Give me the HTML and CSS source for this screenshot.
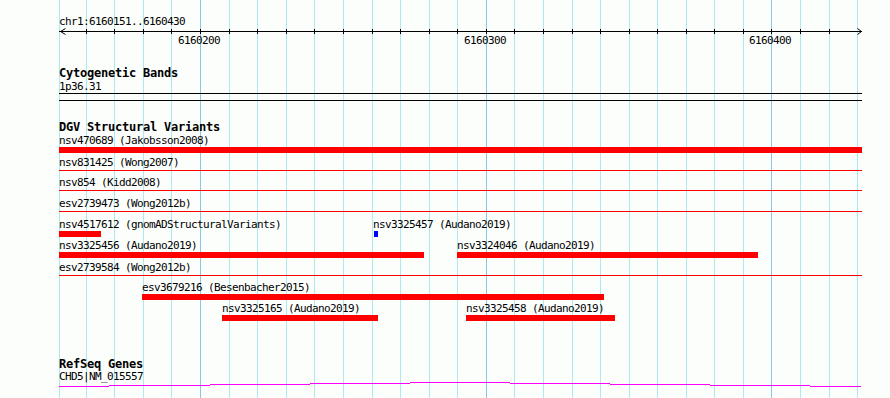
FILE: index.html
```html
<!DOCTYPE html>
<html>
<head>
<meta charset="utf-8">
<link rel="stylesheet" href="styles.css">
</head>
<body>
<div class="view">
  <svg class="grid" width="890" height="398" viewBox="0 0 890 398">
    <g class="minor">
      <rect x="59" y="0" width="1" height="398"/><rect x="86" y="0" width="1" height="398"/>
      <rect x="114" y="0" width="1" height="398"/><rect x="143" y="0" width="1" height="398"/>
      <rect x="171" y="0" width="1" height="398"/><rect x="229" y="0" width="1" height="398"/>
      <rect x="257" y="0" width="1" height="398"/><rect x="286" y="0" width="1" height="398"/>
      <rect x="314" y="0" width="1" height="398"/><rect x="343" y="0" width="1" height="398"/>
      <rect x="372" y="0" width="1" height="398"/><rect x="400" y="0" width="1" height="398"/>
      <rect x="429" y="0" width="1" height="398"/><rect x="457" y="0" width="1" height="398"/>
      <rect x="514" y="0" width="1" height="398"/><rect x="543" y="0" width="1" height="398"/>
      <rect x="572" y="0" width="1" height="398"/><rect x="600" y="0" width="1" height="398"/>
      <rect x="629" y="0" width="1" height="398"/><rect x="657" y="0" width="1" height="398"/>
      <rect x="686" y="0" width="1" height="398"/><rect x="714" y="0" width="1" height="398"/>
      <rect x="743" y="0" width="1" height="398"/><rect x="800" y="0" width="1" height="398"/>
      <rect x="829" y="0" width="1" height="398"/><rect x="857" y="0" width="1" height="398"/>
    </g>
    <g class="major">
      <rect x="200" y="0" width="1" height="398"/><rect x="486" y="0" width="1" height="398"/>
      <rect x="771" y="0" width="1" height="398"/>
    </g>
  </svg>

  <div class="tracks">
    <section class="scale">
      <div class="txt">chr1:6160151..6160430</div>
      <svg class="ruler" width="803" height="6" viewBox="0 0 803 6">
        <rect x="0" y="3" width="803" height="1"/>
        <g>
          <rect x="27" y="1" width="1" height="5"/><rect x="55" y="1" width="1" height="5"/>
          <rect x="84" y="1" width="1" height="5"/><rect x="112" y="1" width="1" height="5"/>
          <rect x="141" y="1" width="1" height="5"/><rect x="170" y="1" width="1" height="5"/>
          <rect x="198" y="1" width="1" height="5"/><rect x="227" y="1" width="1" height="5"/>
          <rect x="255" y="1" width="1" height="5"/><rect x="284" y="1" width="1" height="5"/>
          <rect x="313" y="1" width="1" height="5"/><rect x="341" y="1" width="1" height="5"/>
          <rect x="370" y="1" width="1" height="5"/><rect x="398" y="1" width="1" height="5"/>
          <rect x="427" y="1" width="1" height="5"/><rect x="455" y="1" width="1" height="5"/>
          <rect x="484" y="1" width="1" height="5"/><rect x="513" y="1" width="1" height="5"/>
          <rect x="541" y="1" width="1" height="5"/><rect x="570" y="1" width="1" height="5"/>
          <rect x="598" y="1" width="1" height="5"/><rect x="627" y="1" width="1" height="5"/>
          <rect x="655" y="1" width="1" height="5"/><rect x="684" y="1" width="1" height="5"/>
          <rect x="712" y="1" width="1" height="5"/><rect x="741" y="1" width="1" height="5"/>
          <rect x="770" y="1" width="1" height="5"/>
        </g>
        <polyline class="arrow" points="6.5,0.5 1.5,3.5 6.5,6.5"/>
        <polyline class="arrow" points="798.5,0.5 802.5,3.5 798.5,6.5"/>
      </svg>
      <div class="ticks">
        <span class="lbl" style="left:119px">6160200</span>
        <span class="lbl" style="left:405px">6160300</span>
        <span class="lbl" style="left:690px">6160400</span>
      </div>
    </section>

    <section class="track">
      <div class="title">Cytogenetic Bands</div>
      <div class="txt">1p36.31</div>
      <div class="band-lines"></div>
    </section>

    <section class="track">
      <div class="title">DGV Structural Variants</div>
      <div class="row h22">
        <span class="lbl" style="left:0px">nsv470689 (Jakobsson2008)</span>
        <span class="bar" style="left:0px;width:803px"></span>
      </div>
      <div class="row h20">
        <span class="lbl" style="left:0px">nsv831425 (Wong2007)</span>
        <span class="line"></span>
      </div>
      <div class="row h21">
        <span class="lbl" style="left:0px">nsv854 (Kidd2008)</span>
        <span class="line"></span>
      </div>
      <div class="row h21">
        <span class="lbl" style="left:0px">esv2739473 (Wong2012b)</span>
        <span class="line"></span>
      </div>
      <div class="row h21">
        <span class="lbl" style="left:0px">nsv4517612 (gnomADStructuralVariants)</span>
        <span class="bar" style="left:0px;width:42px"></span>
        <span class="lbl" style="left:314px">nsv3325457 (Audano2019)</span>
        <span class="bar blue" style="left:315px;width:4px"></span>
      </div>
      <div class="row h22">
        <span class="lbl" style="left:0px">nsv3325456 (Audano2019)</span>
        <span class="bar" style="left:0px;width:365px"></span>
        <span class="lbl" style="left:398px">nsv3324046 (Audano2019)</span>
        <span class="bar" style="left:398px;width:301px"></span>
      </div>
      <div class="row h20">
        <span class="lbl" style="left:0px">esv2739584 (Wong2012b)</span>
        <span class="line"></span>
      </div>
      <div class="row h21">
        <span class="lbl" style="left:83px">esv3679216 (Besenbacher2015)</span>
        <span class="bar" style="left:83px;width:462px"></span>
      </div>
      <div class="row h21">
        <span class="lbl" style="left:163px">nsv3325165 (Audano2019)</span>
        <span class="bar" style="left:163px;width:156px"></span>
        <span class="lbl" style="left:407px">nsv3325458 (Audano2019)</span>
        <span class="bar" style="left:407px;width:149px"></span>
      </div>
    </section>

    <section class="track genes">
      <div class="title short">RefSeq Genes</div>
      <div class="gene-row">
        <span class="lbl" style="left:0px">CHD5|NM_015557</span>
        <svg class="intron" width="803" height="5" viewBox="0 0 803 5">
          <rect x="0" y="4" width="50" height="1"/>
          <rect x="50" y="3" width="101" height="1"/>
          <rect x="151" y="2" width="100" height="1"/>
          <rect x="251" y="1" width="100" height="1"/>
          <rect x="351" y="0" width="100" height="1"/>
          <rect x="451" y="1" width="100" height="1"/>
          <rect x="551" y="2" width="100" height="1"/>
          <rect x="651" y="3" width="100" height="1"/>
          <rect x="751" y="4" width="51" height="1"/>
        </svg>
      </div>
    </section>
  </div>
</div>
</body>
</html>
```

FILE: styles.css
```css
html, body {
  margin: 0;
  padding: 0;
  background: #fcfefc;
}

.view {
  position: relative;
  width: 890px;
  height: 398px;
  overflow: hidden;
  background: #fcfefc;
  font-family: "DejaVu Sans Mono", "Liberation Mono", monospace;
  color: #000;
}

.grid {
  position: absolute;
  left: 0;
  top: 0;
  display: block;
}

.grid .minor { fill: #ade9ef; }
.grid .major { fill: #87c9e6; }

.tracks {
  position: relative;
  width: 803px;
  padding: 15px 0 0 59px;
}

.txt,
.lbl {
  font-size: 11px;
  letter-spacing: -0.62px;
  line-height: 13px;
  white-space: nowrap;
}

.txt {
  height: 13px;
}

.title {
  font-size: 12px;
  font-weight: bold;
  letter-spacing: -0.22px;
  line-height: 13px;
  height: 13px;
  white-space: nowrap;
}

.title.short {
  height: 12px;
}

.ruler {
  display: block;
  overflow: visible;
  fill: #000;
}

.ruler .arrow {
  fill: none;
  stroke: #000;
  stroke-width: 1;
}

.ticks {
  position: relative;
  height: 13px;
}

.lbl {
  position: absolute;
  top: 0;
}

.track {
  margin-top: 20px;
}

.track.genes {
  margin-top: 35px;
}

.band-lines {
  height: 6px;
  border-top: 1px solid #000;
  border-bottom: 1px solid #000;
}

.row {
  position: relative;
}

.h20 { height: 20px; }
.h21 { height: 21px; }
.h22 { height: 22px; }

.bar {
  position: absolute;
  top: 13px;
  height: 6px;
  background: #ff0000;
}

.bar.blue {
  background: #0000ff;
}

.line {
  position: absolute;
  top: 14px;
  left: 0;
  right: 0;
  height: 1px;
  background: #ff0000;
}

.gene-row {
  position: relative;
  height: 28px;
}

.intron {
  position: absolute;
  left: 0;
  top: 12px;
  display: block;
  fill: #ff00ff;
}
```
